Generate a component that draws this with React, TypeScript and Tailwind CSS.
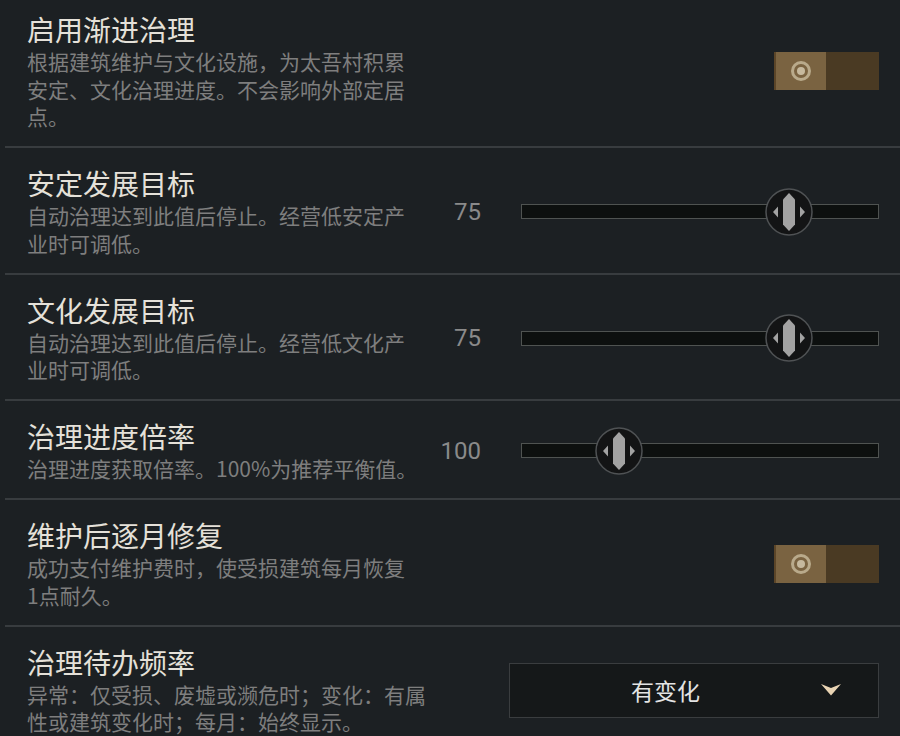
import React from "react";

type Control =
  | { kind: "toggle"; on: boolean }
  | { kind: "slider"; value: number; min: number; max: number }
  | { kind: "select"; value: string };

interface Setting {
  title: string;
  lines: string[];
  control: Control;
}

const settings: Setting[] = [
  {
    title: "启用渐进治理",
    lines: [
      "根据建筑维护与文化设施，为太吾村积累",
      "安定、文化治理进度。不会影响外部定居",
      "点。",
    ],
    control: { kind: "toggle", on: true },
  },
  {
    title: "安定发展目标",
    lines: ["自动治理达到此值后停止。经营低安定产", "业时可调低。"],
    control: { kind: "slider", value: 75, min: 0, max: 100 },
  },
  {
    title: "文化发展目标",
    lines: ["自动治理达到此值后停止。经营低文化产", "业时可调低。"],
    control: { kind: "slider", value: 75, min: 0, max: 100 },
  },
  {
    title: "治理进度倍率",
    lines: ["治理进度获取倍率。100%为推荐平衡值。"],
    control: { kind: "slider", value: 100, min: 25, max: 300 },
  },
  {
    title: "维护后逐月修复",
    lines: ["成功支付维护费时，使受损建筑每月恢复", "1点耐久。"],
    control: { kind: "toggle", on: true },
  },
  {
    title: "治理待办频率",
    lines: ["异常：仅受损、废墟或濒危时；变化：有属", "性或建筑变化时；每月：始终显示。"],
    control: { kind: "select", value: "有变化" },
  },
];

function Toggle() {
  return (
    <div className="flex h-[38px] w-[105px]">
      <div className="flex w-[52px] items-center justify-center border-l-2 border-[#5b4528] bg-[#7a6341]">
        <svg width="22" height="22" viewBox="0 0 22 22">
          <circle cx="11" cy="11" r="8.5" fill="none" stroke="#b9aa8b" strokeWidth="3" />
          <circle cx="11" cy="11" r="4" fill="#c6b99e" />
        </svg>
      </div>
      <div className="flex-1 bg-[#4a3a23]" />
    </div>
  );
}

function Thumb() {
  return (
    <svg width="48" height="48" viewBox="0 0 48 48">
      <circle cx="24" cy="24" r="23" fill="#131415" stroke="#4f5254" strokeWidth="1.5" />
      <polygon points="24,5 30,11.5 30,36.5 24,43 18,36.5 18,11.5" fill="#a3a3a3" />
      <polygon points="8,24 13,18.5 13,29.5" fill="#a3a3a3" />
      <polygon points="40,24 35,18.5 35,29.5" fill="#a3a3a3" />
    </svg>
  );
}

function Slider({ value, min, max }: { value: number; min: number; max: number }) {
  const pct = ((value - min) / (max - min)) * 100;
  return (
    <div className="flex items-center">
      <div className="w-[60px] text-right font-['Roboto',sans-serif] text-[24px] leading-[30px] text-[#8a8a8a]">
        {value}
      </div>
      <div className="relative ml-[40px] h-[15px] w-[358px] border border-[#4f5351] bg-[#0d100f]">
        <div
          className="absolute top-1/2 -translate-x-1/2 -translate-y-1/2"
          style={{ left: `${pct}%` }}
        >
          <Thumb />
        </div>
      </div>
    </div>
  );
}

function Select({ value }: { value: string }) {
  return (
    <div className="flex h-[55px] w-[370px] items-center border border-[#3a3d3f] bg-[#151819]">
      <div className="flex-1 text-center text-[23px] leading-[30px] text-[#e4e4e4]">{value}</div>
      <svg width="20" height="12" viewBox="0 0 20 12" className="mr-[37px]">
        <path d="M0 0 L10 4 L20 0 L10 11.5 Z" fill="#e8d3b3" />
      </svg>
    </div>
  );
}

function ControlView({ control }: { control: Control }) {
  if (control.kind === "toggle") return <Toggle />;
  if (control.kind === "slider")
    return <Slider value={control.value} min={control.min} max={control.max} />;
  return <Select value={control.value} />;
}

export default function App() {
  return (
    <div className="h-[736px] w-[900px] overflow-hidden bg-[#1c2023] font-['Noto_Sans_CJK_SC','Noto_Sans',sans-serif]">
      {settings.map((s, i) => (
        <div key={s.title}>
          {i > 0 && <div className="ml-[5px] h-[2px] bg-[#383c3f]" />}
          <div
            className={`flex items-center pb-[15.5px] pl-[27px] pr-[21px] ${
              i === 0 ? "pt-[12px]" : "pt-[18px]"
            }`}
          >
            <div className="w-[392px] shrink-0">
              <div className="text-[28px] leading-[34px] text-[#e5e1d9]">{s.title}</div>
              <div className="mt-[2px] text-[21px] leading-[27.5px] text-[#7e7e7e]">
                {s.lines.map((l) => (
                  <div key={l} className="whitespace-nowrap">
                    {l}
                  </div>
                ))}
              </div>
            </div>
            <div className="flex flex-1 justify-end">
              <ControlView control={s.control} />
            </div>
          </div>
        </div>
      ))}
    </div>
  );
}
